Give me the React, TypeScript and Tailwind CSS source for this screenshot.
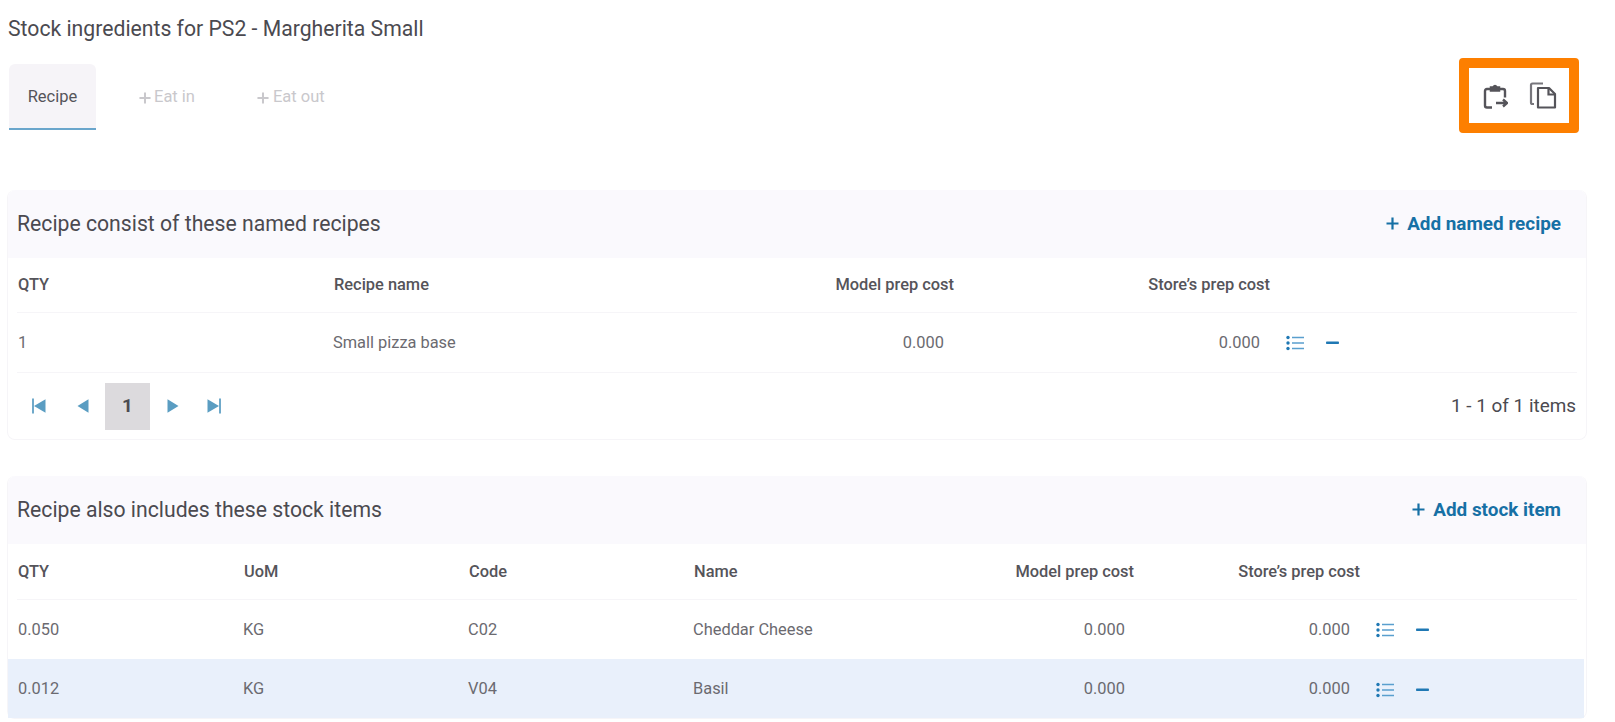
import React from "react";

const ListIcon = () => (
  <svg width="18" height="16" viewBox="0 0 18 16" className="block">
    <circle cx="2" cy="2.5" r="1.7" fill="#1f78b4" />
    <circle cx="2" cy="8" r="1.7" fill="#1f78b4" />
    <circle cx="2" cy="13.5" r="1.7" fill="#1f78b4" />
    <path d="M6 2.5H18M6 8H18M6 13.5H18" stroke="#5a9fce" strokeWidth="1.3" />
  </svg>
);

const MinusIcon = () => (
  <svg width="14" height="4" viewBox="0 0 14 4" className="block">
    <rect x="0" y="0.5" width="13" height="2.6" rx="0.8" fill="#1f78b4" />
  </svg>
);

const PlusIcon = ({ size = 13, color = "#1670a5", w = 2.2 }: { size?: number; color?: string; w?: number }) => (
  <svg width={size} height={size} viewBox="0 0 13 13" className="block">
    <path d="M6.5 0.5V12.5M0.5 6.5H12.5" stroke={color} strokeWidth={w} />
  </svg>
);

const Actions = () => (
  <div className="flex items-center">
    <ListIcon />
    <span className="ml-[22px]">
      <MinusIcon />
    </span>
  </div>
);

const CardHeader = ({ title, action }: { title: string; action: string }) => (
  <div className="flex h-[68px] items-center justify-between rounded-t-lg bg-[#faf9fd] pl-[9px] pr-[25px]">
    <span className="text-[21.2px] text-[#4b4a50]">{title}</span>
    <span className="flex items-center gap-[8px] text-[18.9px] font-bold text-[#1670a5]">
      <PlusIcon />
      {action}
    </span>
  </div>
);

const PagerIcon = ({ d, bar }: { d: string; bar?: number }) => (
  <svg width="16" height="16" viewBox="0 0 16 16" className="block">
    <path d={d} fill="#5a9dc2" />
    {bar !== undefined && <rect x={bar} y="0.5" width="2" height="15" fill="#6fa9ca" />}
  </svg>
);

const stockRows = [
  { qty: "0.050", uom: "KG", code: "C02", name: "Cheddar Cheese", hl: false },
  { qty: "0.012", uom: "KG", code: "V04", name: "Basil", hl: true },
];

const App = () => (
  <div className="h-[722px] w-[1615px] overflow-hidden bg-white font-['Roboto',sans-serif]">
    <div className="h-[64px] pl-[8px] pt-[16px] text-[21.2px] leading-[26px] text-[#4b4a50]">
      Stock ingredients for PS2 - Margherita Small
    </div>

    <div className="flex h-[126px] items-start justify-between">
      <div className="flex text-[16.5px] text-[#c9c8cc]">
        <div className="ml-[9px] flex h-[66px] w-[87px] items-center justify-center rounded-t-md border-b-2 border-[#6aa6cc] bg-[#f6f4f8] pt-[2px] text-[#55545a]">
          Recipe
        </div>
        <div className="ml-[43px] flex h-[66px] items-center gap-[3px] pt-[1px]">
          <PlusIcon size={12} color="#c9c8cc" w={2.2} />
          Eat in
        </div>
        <div className="ml-[62px] flex h-[66px] items-center gap-[4px] pt-[1px]">
          <PlusIcon size={12} color="#c9c8cc" w={2.2} />
          Eat out
        </div>
      </div>
      <div className="mr-[36px] -mt-[6px] flex h-[75px] w-[120px] items-center gap-[21px] rounded-[4px] border-[10px] border-[#fd7f00] bg-white pl-[14px]">
        <svg width="25" height="26" viewBox="0 0 25 26" fill="none" stroke="#55545a" strokeWidth="2.4" className="block">
          <path d="M7 6H4Q2 6 2 8V22.5Q2 24.5 4 24.5H9" />
          <path d="M17 6H20Q22 6 22 8V14.5" />
          <path d="M7.5 8V4H10Q12 1 14 4H16.5V8Z" fill="#55545a" stroke="#55545a" strokeWidth="1.5" />
          <path d="M13 20H24M20 16.5L24 20L20 23.5" />
        </svg>
        <svg width="28" height="27" viewBox="0 0 28 27" fill="none" stroke="#55545a" strokeWidth="2.2" className="block">
          <path d="M5 22H3.5Q2 22 2 20.5V3Q2 1.5 3.5 1.5H14" stroke="#77767c" />
          <path d="M9 6H20L26 12V25.5H9Z" strokeLinejoin="round" />
          <path d="M19.5 6V12.5H26" />
        </svg>
      </div>
    </div>

    <section className="ml-[7px] h-[250px] w-[1580px] rounded-lg border border-t-0 border-[#f6f5f8]">
      <CardHeader title="Recipe consist of these named recipes" action="Add named recipe" />
      <div className="mx-[9px]">
        <div className="grid h-[55px] grid-cols-[316px_300px_321px_316px_1fr] items-center border-b border-[#f6f5f8] pt-[1px] text-[16.4px] font-medium text-[#55545a]">
          <span className="pl-[1px]">QTY</span>
          <span className="pl-[1px]">Recipe name</span>
          <span className="text-right">Model prep cost</span>
          <span className="text-right">Store’s prep cost</span>
          <span />
        </div>
        <div className="grid h-[60px] grid-cols-[316px_300px_311px_316px_1fr] items-center border-b border-[#f6f5f8] pt-[1px] text-[16.4px] text-[#6b6a70]">
          <span className="pl-[1px]">1</span>
          <span>Small pizza base</span>
          <span className="text-right">0.000</span>
          <span className="text-right">0.000</span>
          <span className="pl-[26px]">
            <Actions />
          </span>
        </div>
      </div>
      <div className="flex h-[66px] items-center justify-between pr-[10px]">
        <div className="flex items-center">
          <span className="ml-[23px]">
            <PagerIcon d="M14.5 1.2V14.8L3 8Z" bar={1} />
          </span>
          <span className="ml-[28px]">
            <PagerIcon d="M13.5 1.2V14.8L2.5 8Z" />
          </span>
          <span className="ml-[14px] flex h-[47px] w-[45px] items-center justify-center bg-[#dcdadd] text-[18.9px] font-bold text-[#4b4a50]">
            1
          </span>
          <span className="ml-[15px]">
            <PagerIcon d="M2.5 1.2V14.8L13.5 8Z" />
          </span>
          <span className="ml-[25px]">
            <PagerIcon d="M1.5 1.2V14.8L13 8Z" bar={13} />
          </span>
        </div>
        <span className="pt-[1px] text-[18.9px] text-[#4b4a50]">1 - 1 of 1 items</span>
      </div>
    </section>

    <section className="ml-[7px] mt-[36px] w-[1580px] rounded-lg border border-t-0 border-[#f6f5f8]">
      <CardHeader title="Recipe also includes these stock items" action="Add stock item" />
      <div className="mx-[9px] grid h-[56px] grid-cols-[227px_225px_225px_225px_215px_226px_1fr] items-center border-b border-[#f6f5f8] pt-[1px] text-[16.4px] font-medium text-[#55545a]">
        <span className="pl-[1px]">QTY</span>
        <span>UoM</span>
        <span>Code</span>
        <span>Name</span>
        <span className="text-right">Model prep cost</span>
        <span className="text-right">Store’s prep cost</span>
        <span />
      </div>
      {stockRows.map((r) => (
        <div
          key={r.code}
          className={`grid h-[59px] grid-cols-[227px_225px_225px_225px_206px_225px_1fr] items-center pl-[9px] text-[16.4px] text-[#6b6a70] ${
            r.hl ? "mr-[2px] bg-[#e9f0fb] pt-[2px]" : "pt-[1px]"
          }`}
        >
          <span className="pl-[1px]">{r.qty}</span>
          <span className="-ml-[1px]">{r.uom}</span>
          <span className="-ml-[1px]">{r.code}</span>
          <span className="-ml-[1px]">{r.name}</span>
          <span className="text-right">0.000</span>
          <span className="text-right">0.000</span>
          <span className="pl-[26px]">
            <Actions />
          </span>
        </div>
      ))}
    </section>
  </div>
);

export default App;
